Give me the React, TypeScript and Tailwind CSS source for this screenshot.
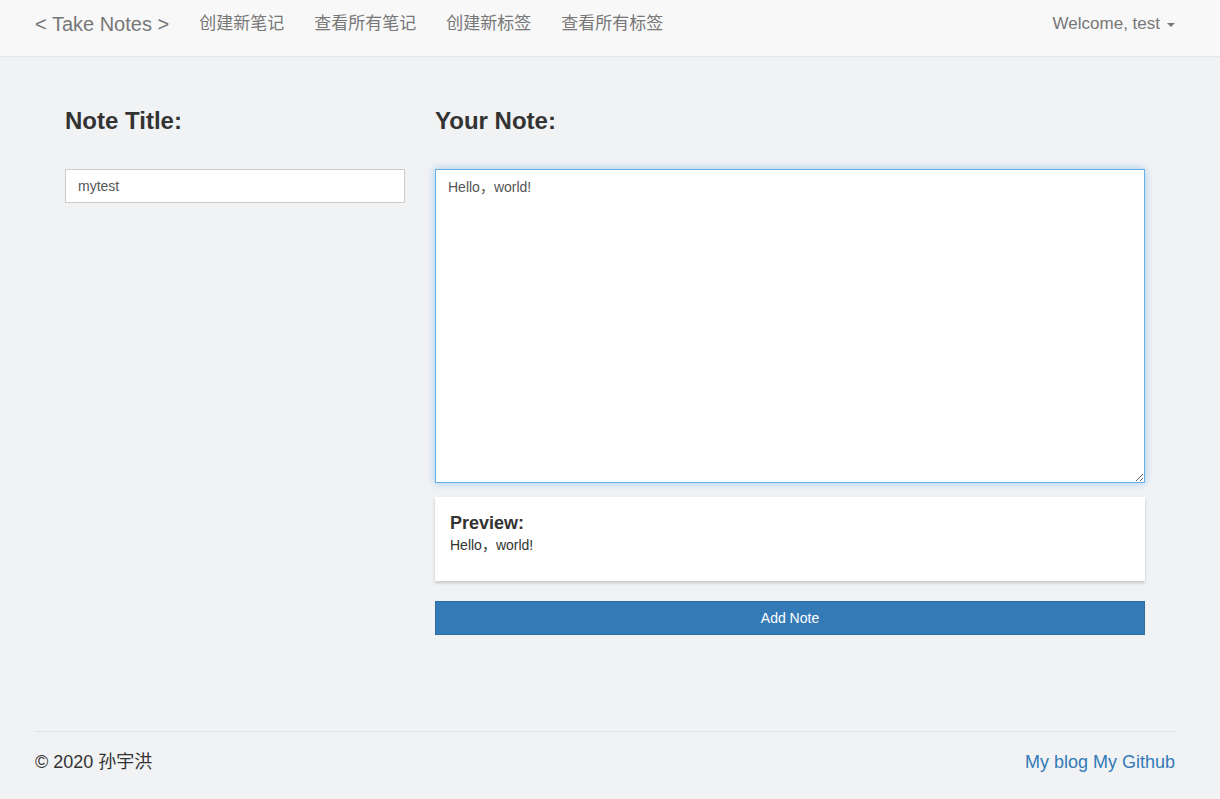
export default function App() {
  const navLinks = ["创建新笔记", "查看所有笔记", "创建新标签", "查看所有标签"];

  return (
    <div className="min-h-[799px] bg-[#f1f2f4] font-['Liberation_Sans','Noto_Sans_CJK_SC',sans-serif] text-[14px] text-[#333]">
      {/* navbar */}
      <nav className="h-[57px] border-b border-[#e7e7e7] bg-[#f8f8f8]">
        <div className="ml-[35px] flex w-[1140px] items-center justify-between pt-[9px]">
          <div className="flex items-center">
            <a className="text-[20px] text-[#777]">&lt; Take Notes &gt;</a>
            <div className="ml-[30px] flex items-center gap-[30px]">
              {navLinks.map((label) => (
                <a key={label} className="text-[17px] text-[#777]">
                  {label}
                </a>
              ))}
            </div>
          </div>
          <div className="flex items-center gap-[7px] text-[17px] text-[#777]">
            <span>Welcome, test</span>
            <span className="mt-[2px] h-0 w-0 border-x-[4px] border-t-[4px] border-x-transparent border-t-[#777]" />
          </div>
        </div>
      </nav>

      {/* main form */}
      <div className="ml-[35px] w-[1140px] px-[30px] pt-[44px]">
        <div className="flex gap-[30px]">
          <div className="w-[340px]">
            <h2 className="mt-[2px] text-[24px] font-bold text-[#333]">Note Title:</h2>
            <input
              className="mt-[30px] block h-[34px] w-full border border-[#ccc] bg-white px-[12px] text-[14px] text-[#555] outline-none"
              defaultValue="mytest"
            />
          </div>

          <div className="flex-1">
            <h2 className="mt-[2px] text-[24px] font-bold text-[#333]">Your Note:</h2>
            <textarea
              className="mt-[30px] block h-[314px] w-full resize-y border border-[#66afe9] bg-white px-[12px] py-[7px] text-[14px] text-[#555] shadow-[0_0_8px_rgba(102,175,233,0.6)] outline-none"
              defaultValue="Hello，world!"
            />
            <div className="mt-[14px] h-[84px] bg-white px-[15px] pt-[16px] shadow-[0_2px_3px_rgba(0,0,0,0.18)]">
              <h3 className="text-[18px] font-bold leading-[20px] text-[#333]">Preview:</h3>
              <p className="mt-[2px] text-[14px] text-[#333]">Hello，world!</p>
            </div>
            <button className="mt-[20px] block h-[34px] w-full border border-[#2e6da4] bg-[#337ab7] text-[14px] text-white">
              Add Note
            </button>
          </div>
        </div>
      </div>

      {/* footer */}
      <footer className="ml-[35px] mt-[96px] flex w-[1140px] items-center justify-between border-t border-[#e1e2e5] pt-[17px] text-[18px]">
        <span className="text-[#333]">© 2020 孙宇洪</span>
        <div className="flex gap-[5px] text-[#337ab7]">
          <a>My blog</a>
          <a>My Github</a>
        </div>
      </footer>
    </div>
  );
}
